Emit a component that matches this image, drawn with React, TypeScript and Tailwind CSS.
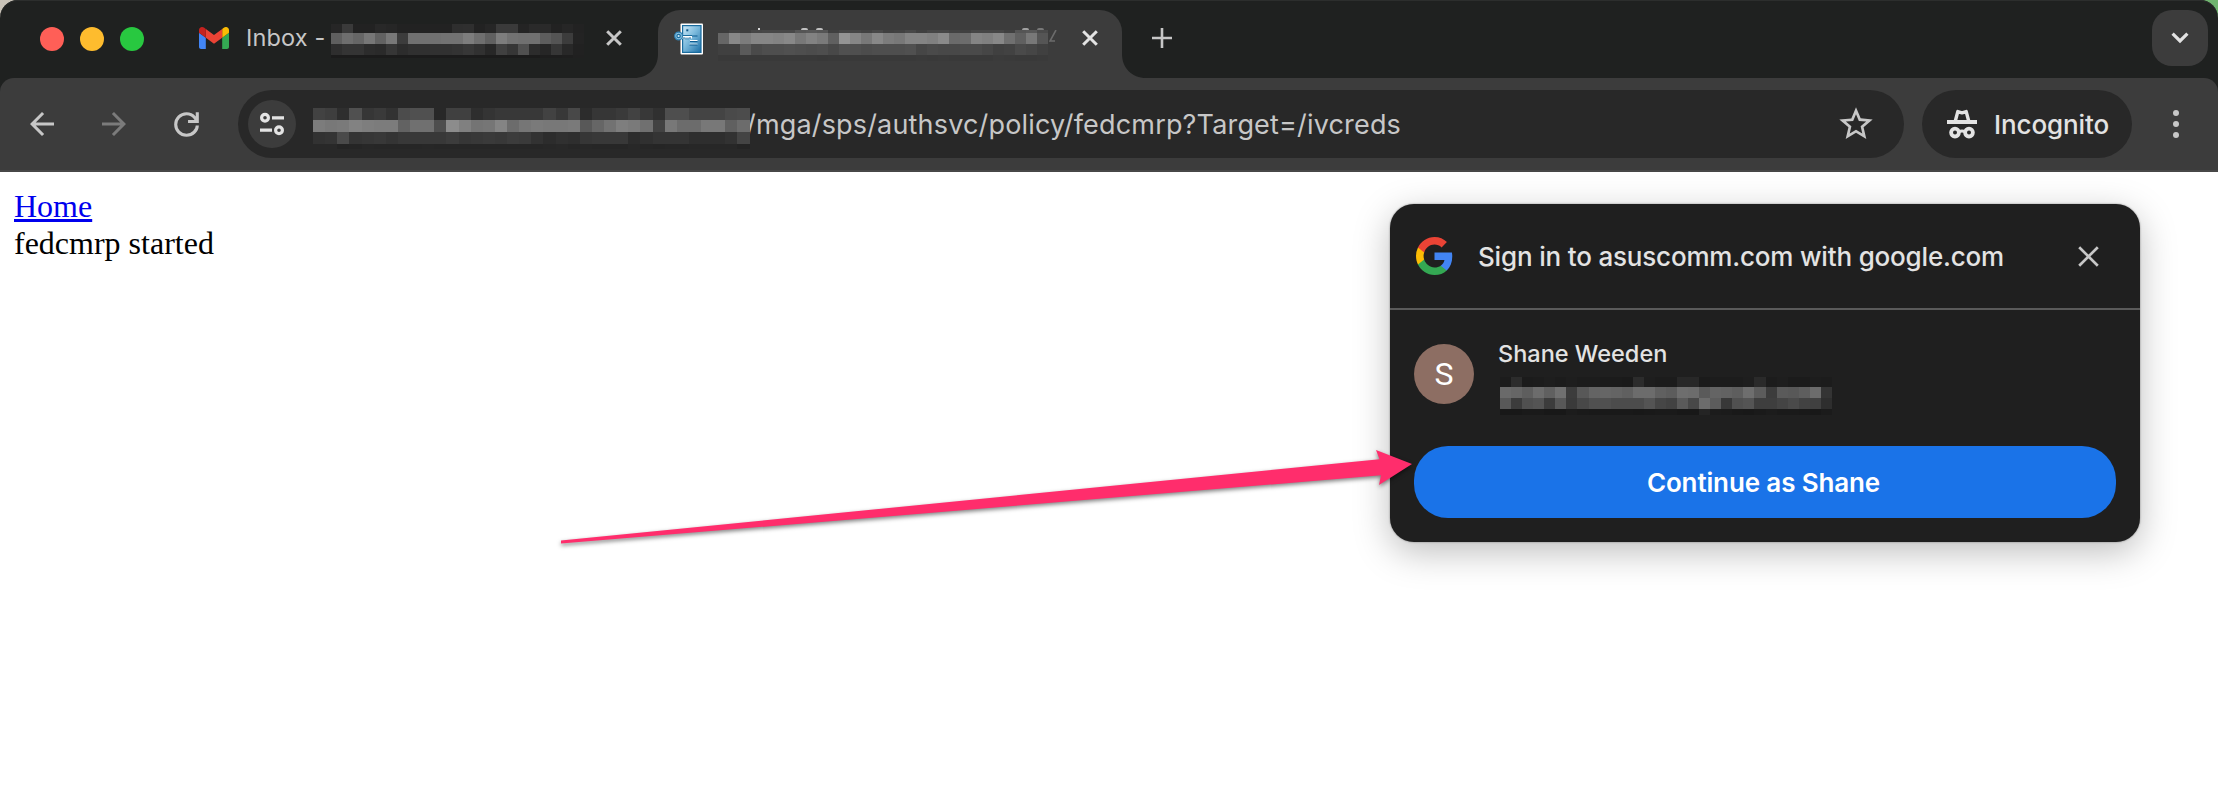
import React from "react";

type MosaicProps = {
  rows: { height: number; cells: string }[];
  cell: number;
};

/** Pixelated strip hiding private text; each cell is a two-digit grey level. */
function Mosaic({ rows, cell }: MosaicProps) {
  return (
    <div className="flex flex-col">
      {rows.map((row, r) => (
        <div key={r} className="flex" style={{ height: row.height }}>
          {row.cells.split(" ").map((g, i) => (
            <div key={i} className="h-full shrink-0" style={{ width: cell, backgroundColor: `#${g}${g}${g}` }} />
          ))}
        </div>
      ))}
    </div>
  );
}

const inboxMosaic = [
  { height: 9, cells: "26 3a 22 22 28 26 22 22 22 22 22 2e 2f 22 26 3a 3a 24 2a 2a 22 26 22" },
  { height: 11, cells: "5f 6e 66 77 62 78 3c 70 70 70 72 72 7d 6f 60 7d 72 70 70 5d 54 3c 23" },
  { height: 11, cells: "2e 34 34 2c 2a 36 2c 30 30 31 31 33 37 31 27 40 36 50 2c 26 36 28 21" },
  { height: 3, cells: "1b 1b 1b 1b 1b 1b 1b 1b 1b 1b 1b 1b 1b 1b 1b 1b 1b 1b 1b 1d 1d 1e 20" },
];

const tabMosaic = [
  { height: 3, cells: "3c 42 3e 46 48 48 48 55 58 55 40 46 46 42 48 40 42 48 40 46 46 42 40 46 46 46 40 55 58 4a" },
  { height: 11, cells: "66 88 7c 86 86 83 88 78 82 7a 60 94 86 78 88 7c 78 84 84 80 8a 6a 6c 84 80 88 70 60 78 55" },
  { height: 11, cells: "40 40 5a 4a 4e 4e 50 4e 4c 4e 48 50 4f 4c 4e 4e 4e 50 46 4a 48 48 4a 4a 46 40 42 4a 46 40" },
  { height: 6, cells: "39 39 39 39 39 39 39 39 39 38 39 39 39 39 39 39 39 39 3a 39 3a 39 39 39 39 3b 3a 39 39 3a" },
];

const urlMosaic = [
  { height: 12, cells: "42 3e 2e 50 36 3a 32 4c 50 50 28 40 40 2e 34 38 38 38 38 42 38 48 2c 36 36 3a 42 38 30 4e 4e 44 44 44 4a 4c" },
  { height: 12, cells: "7c 78 7a 82 7e 7c 7c 62 70 70 4e 8c 80 74 76 84 6c 76 7a 78 78 7a 58 66 72 7e 7a 70 42 78 6c 6c 78 78 60 6c" },
  { height: 12, cells: "32 34 4a 34 36 38 34 38 38 38 38 3c 36 38 3a 38 3c 3a 32 2c 30 2e 36 38 38 38 2c 30 34 34 34 2e 2e 2e 32 44" },
  { height: 5, cells: "28 28 24 25 27 26 26 26 26 27 26 26 26 26 26 26 26 26 26 27 28 26 27 26 26 26 28 26 25 26 26 27 27 27 27 24" },
];

const emailMosaic = [
  { height: 10, cells: "1c 2c 1b 1c 1e 1c 1e 1c 1c 1b 1b 1a 2c 1e 1c 1c 28 28 1b 1c 1c 1c 1e 2a 1c 1e 1b 1b 1d 1c" },
  { height: 11, cells: "6a 66 5e 6c 60 70 3c 58 64 66 64 60 6c 6c 60 5c 6e 6c 5a 64 62 5e 6e 5c 3c 5a 58 5e 6c 34" },
  { height: 11, cells: "58 3c 50 54 3c 58 3a 48 50 50 4c 4c 4c 54 46 42 5a 48 6c 5c 38 50 54 3e 3e 44 4a 42 40 2e" },
  { height: 6, cells: "18 18 1a 1a 18 18 1c 1a 19 19 19 19 18 19 1a 1a 18 18 24 1c 1b 19 18 1a 1c 1a 1a 19 18 1b" },
];

function Close({ size, width, className }: { size: number; width: number; className: string }) {
  return (
    <svg width={size} height={size} viewBox={`0 0 ${size} ${size}`} className={className}>
      <path
        d={`M1.2 1.2L${size - 1.2} ${size - 1.2}M${size - 1.2} 1.2L1.2 ${size - 1.2}`}
        stroke="currentColor"
        strokeWidth={width}
        fill="none"
      />
    </svg>
  );
}

function GmailIcon() {
  return (
    <svg width="30" height="22" viewBox="52 42 88 66" preserveAspectRatio="none">
      <path fill="#4285f4" d="M58 108h14V74L52 59v43c0 3.32 2.69 6 6 6" />
      <path fill="#34a853" d="M120 108h14c3.32 0 6-2.69 6-6V59l-20 15" />
      <path fill="#fbbc04" d="M120 48v26l20-15v-8c0-7.42-8.47-11.65-14.4-7.2" />
      <path fill="#ea4335" d="M72 74V48l24 18 24-18v26L96 92" />
      <path fill="#c5221f" d="M52 51v8l20 15V48l-5.6-4.2c-5.94-4.45-14.4-.22-14.4 7.2" />
    </svg>
  );
}

function DocKeyIcon() {
  return (
    <svg width="30" height="32" viewBox="0 0 30 32">
      <defs>
        <linearGradient id="doc" x1="0" y1="0" x2="1" y2="1">
          <stop offset="0" stopColor="#cfe9f6" />
          <stop offset="0.45" stopColor="#7dbbdd" />
          <stop offset="1" stopColor="#1b6ea5" />
        </linearGradient>
      </defs>
      <rect x="6.5" y="0.5" width="22.5" height="31" rx="1" fill="#fff" />
      <rect x="8.6" y="2.6" width="18.4" height="26.8" fill="url(#doc)" stroke="#1a6c9e" strokeWidth="1.2" />
      <rect x="12.3" y="6.3" width="2" height="2" fill="#0d5486" />
      <path d="M16 17.5h7.5M15.5 21.2h8" stroke="#fff" strokeWidth="1" />
      <path d="M18 13h5.5M16 18.5h7.5M15.5 22h8" stroke="#0d5c92" strokeWidth="1.2" />
      <path d="M8 13h10v2.5H8z" fill="#fff" />
      <path d="M8 12.5h10M10 16v-2M12 16.5v-2M14 16.5v-2M16 16v-2" stroke="#1a6c9e" strokeWidth="1" />
      <circle cx="4.6" cy="13" r="3.9" fill="#8cc3e2" stroke="#2f7fb0" strokeWidth="1.2" />
      <circle cx="4.6" cy="13" r="1.7" fill="#d6ecf7" stroke="#1a6c9e" strokeWidth="1.2" />
    </svg>
  );
}

function GoogleIcon() {
  return (
    <svg width="37" height="38" viewBox="2 2 44 44" preserveAspectRatio="none">
      <path fill="#4285f4" d="M45.12 24.5c0-1.56-.14-3.06-.4-4.5H24v8.51h11.84c-.51 2.75-2.06 5.08-4.39 6.64v5.52h7.11c4.16-3.83 6.56-9.47 6.56-16.17z" />
      <path fill="#34a853" d="M24 46c5.94 0 10.92-1.97 14.56-5.33l-7.11-5.52c-1.97 1.32-4.49 2.1-7.45 2.1-5.73 0-10.58-3.87-12.31-9.07H4.34v5.7C7.96 41.07 15.4 46 24 46z" />
      <path fill="#fbbc05" d="M11.69 28.18C11.25 26.86 11 25.45 11 24s.25-2.86.69-4.18v-5.7H4.34A21.99 21.99 0 0 0 2 24c0 3.55.85 6.91 2.34 9.88l7.35-5.7z" />
      <path fill="#ea4335" d="M24 10.75c3.23 0 6.13 1.11 8.41 3.29l6.31-6.31C34.91 4.18 29.93 2 24 2 15.4 2 7.96 6.93 4.34 14.12l7.35 5.7c1.73-5.2 6.58-9.07 12.31-9.07z" />
    </svg>
  );
}

function IncognitoIcon() {
  return (
    <svg width="30" height="30" viewBox="0 0 30 30" fill="none" stroke="currentColor">
      <path d="M0 13h30" strokeWidth="4" />
      <path d="M8.3 12L10.8 2.6L15 3.8L19.2 2.6L21.7 12" strokeWidth="3.4" strokeLinejoin="round" />
      <circle cx="8" cy="23.6" r="3.9" strokeWidth="3.8" />
      <circle cx="22" cy="23.6" r="3.9" strokeWidth="3.8" />
      <path d="M11.5 22.6q3.5-1.4 7 0" strokeWidth="3" />
    </svg>
  );
}

function TabStrip() {
  return (
    <div className="flex h-[78px] items-start">
      <div className="flex h-[78px] w-[199px] items-center gap-4 pl-10">
        <span className="size-6 rounded-full bg-[#ff5f57]" />
        <span className="size-6 rounded-full bg-[#febc2e]" />
        <span className="size-6 rounded-full bg-[#28c840]" />
      </div>
      <div className="flex h-[76px] w-[435px] items-center">
        <GmailIcon />
        <span className="ml-[17px] w-[85px] whitespace-nowrap text-[23.5px] leading-7 tracking-[0.15px] text-[#c7c7c7]">
          Inbox -
        </span>
        <div className="mt-[6px] w-[275px]">
          <Mosaic rows={inboxMosaic} cell={11} />
        </div>
        <Close size={16} width={3} className="text-[#c7c7c7]" />
      </div>
      <svg width="24" height="24" viewBox="0 0 24 24" className="mt-[54px] text-[#3c3c3c]">
        <path d="M24 0v24H0C14 24 24 14 24 0z" fill="currentColor" />
      </svg>
      <div className="relative mt-[10px] flex h-[68px] w-[464px] rounded-t-[22px] bg-[#3c3c3c] pl-4">
        <div className="mt-[13px] w-[44px]">
          <DocKeyIcon />
        </div>
        <div className="mt-5 w-[331px]">
          <Mosaic rows={tabMosaic} cell={11.03} />
        </div>
        <svg width="9" height="13" viewBox="0 0 9 13" className="mt-5 text-[#6b6b6b]">
          <path d="M7 0L1 11h5" stroke="currentColor" strokeWidth="1.6" fill="none" />
        </svg>
        <Close size={16} width={3} className="mt-5 ml-6 text-[#e3e3e3]" />
        <span className="absolute top-[18px] left-[100px] h-[2px] w-[2px] bg-[#d8d8d8]" />
        <span className="absolute top-[18px] left-[143px] h-[2px] w-[7px] rounded-t-full bg-[#c0c0c0]" />
        <span className="absolute top-[18px] left-[158px] h-[2px] w-[7px] rounded-t-full bg-[#c0c0c0]" />
        <span className="absolute top-[18px] left-[364px] h-[2px] w-[7px] rounded-t-full bg-[#a0a0a0]" />
        <span className="absolute top-[18px] left-[379px] h-[2px] w-[7px] rounded-t-full bg-[#787878]" />
      </div>
      <svg width="24" height="24" viewBox="0 0 24 24" className="mt-[54px] text-[#3c3c3c]">
        <path d="M0 0v24h24C10 24 0 14 0 0z" fill="currentColor" />
      </svg>
      <svg width="20" height="20" viewBox="0 0 20 20" className="mt-7 ml-[6px] text-[#c7c7c7]">
        <path d="M10 0v20M0 10h20" stroke="currentColor" strokeWidth="2.6" />
      </svg>
      <div className="mt-[10px] mr-[10px] ml-auto flex size-14 items-center justify-center rounded-[20px] bg-[#3c3c3c] text-[#e3e3e3]">
        <svg width="18" height="12" viewBox="0 0 18 12">
          <path d="M1.6 1.6L9 9l7.4-7.4" stroke="currentColor" strokeWidth="3.2" fill="none" />
        </svg>
      </div>
    </div>
  );
}

function Toolbar() {
  return (
    <div className="flex h-[94px] items-center rounded-t-[14px] border-b-2 border-[#474747] bg-[#3c3c3c] pt-px pb-px text-[#c7c7c7]">
      <svg width="36" height="36" viewBox="0 0 24 24" fill="currentColor" className="ml-[24px]">
        <path d="m7.825 13 5.6 5.6L12 20l-8-8 8-8 1.425 1.4-5.6 5.6H20v2z" />
      </svg>
      <svg width="36" height="36" viewBox="0 0 24 24" fill="currentColor" className="ml-[35.5px] text-[#7b7b7b]">
        <path d="m16.175 13-5.6 5.6L12 20l8-8-8-8-1.425 1.4 5.6 5.6H4v2z" />
      </svg>
      <svg width="37" height="37" viewBox="0 0 24 24" fill="currentColor" className="ml-[36px]">
        <path d="M12 20q-3.35 0-5.675-2.325Q4 15.35 4 12q0-3.35 2.325-5.675Q8.65 4 12 4q1.725 0 3.3.713 1.575.712 2.7 2.037V4h2v7h-7V9h4.2q-.8-1.4-2.187-2.2Q13.625 6 12 6 9.5 6 7.75 7.75T6 12q0 2.5 1.75 4.25T12 18q2.5 0 4.25-1.75T18 12.6h2q-.1 3.1-2.375 5.25T12 20z" />
      </svg>
      <div className="ml-[33.5px] flex h-[68px] w-[1666px] items-center rounded-full bg-[#282828] pl-[10px]">
        <div className="flex size-12 items-center justify-center rounded-full bg-[#3c3c3c] text-[#e3e3e3]">
          <svg width="24" height="24" viewBox="0 0 24 24" fill="none" stroke="currentColor" strokeWidth="3.2">
            <circle cx="5" cy="5.8" r="3.4" />
            <path d="M12 5.8h12M0 18.2h12" />
            <circle cx="19" cy="18.2" r="3.4" />
          </svg>
        </div>
        <div className="z-10 mt-[9px] ml-[17px] w-[433px]">
          <Mosaic rows={urlMosaic} cell={12.14} />
        </div>
        <span className="mt-[2px] text-[27px] leading-8 tracking-[0.17px] whitespace-nowrap">
          /mga/sps/authsvc/policy/fedcmrp?Target=/ivcreds
        </span>
        <svg width="40" height="40" viewBox="0 0 24 24" fill="currentColor" className="mr-7 mb-px ml-auto">
          <path d="M22 9.24l-7.19-.62L12 2 9.19 8.63 2 9.24l5.46 4.73L5.82 21 12 17.27 18.18 21l-1.63-7.03L22 9.24zM12 15.4l-3.76 2.27 1-4.28-3.32-2.88 4.38-.38L12 6.1l1.71 4.04 4.38.38-3.32 2.88 1 4.28L12 15.4z" />
        </svg>
      </div>
      <div className="ml-[18px] flex h-[68px] w-[210px] items-center rounded-full bg-[#282828] pl-[25px] text-[#e3e3e3]">
        <IncognitoIcon />
        <span className="mt-[2px] ml-[17px] text-[26px] leading-8 font-[450] tracking-[-0.1px] whitespace-nowrap">
          Incognito
        </span>
      </div>
      <div className="ml-[41px] flex flex-col gap-[5px]">
        <span className="size-[6px] rounded-full bg-current" />
        <span className="size-[6px] rounded-full bg-current" />
        <span className="size-[6px] rounded-full bg-current" />
      </div>
    </div>
  );
}

function SignInDialog() {
  return (
    <div className="absolute top-[204px] left-[1390px] flex h-[338px] w-[750px] flex-col rounded-[24px] bg-[#1f1f1f] text-[#e3e3e3] shadow-[0_0_2px_rgba(0,0,0,0.45),0_10px_36px_rgba(0,0,0,0.26)]">
      <div className="flex h-[106px] items-center border-b-2 border-[#5a5a5a] pl-[26px]">
        <GoogleIcon />
        <span className="mt-[2px] ml-[25px] text-[26px] leading-8 font-[450] tracking-[-0.18px] whitespace-nowrap">
          Sign in to asuscomm.com with google.com
        </span>
        <Close size={21} width={2.7} className="mr-[41px] ml-auto text-[#c7c7c7]" />
      </div>
      <div className="flex pt-[22px] pl-6">
        <div className="mt-3 flex size-[60px] items-center justify-center rounded-full bg-[#8d6e63] font-[Roboto] text-[32px] leading-none text-white">
          S
        </div>
        <div className="ml-6 flex flex-col">
          <span className="mt-px self-start text-[23.5px] leading-[42px] font-[450] whitespace-nowrap">Shane Weeden</span>
          <div className="mt-[2px] ml-[2px]">
            <Mosaic rows={emailMosaic} cell={11.07} />
          </div>
        </div>
      </div>
      <button className="mt-auto mb-6 ml-6 flex h-[72px] w-[702px] items-center justify-center rounded-[34px] bg-[#1a73e8] pt-px pr-[3px] text-[26px] font-semibold tracking-[-0.13px] text-white">
        Continue as Shane
      </button>
    </div>
  );
}

function PointerArrow() {
  return (
    <svg
      width="870"
      height="110"
      viewBox="555 445 870 110"
      className="absolute top-[445px] left-[555px] drop-shadow-[0_2px_2px_rgba(0,0,0,0.5)]"
    >
      <path d="M561 540.6L1379.5 459.2L1376 450L1412 464L1379 485L1381 475.3L561 543.6z" fill="#ff2d6c" />
    </svg>
  );
}

export default function App() {
  return (
    <div className="relative h-[808px] w-[2218px] overflow-hidden bg-white font-[Inter,sans-serif]">
      <div className="bg-linear-to-r from-[#c9c3b8] to-[#6fb36f]">
        <div className="rounded-t-[18px] bg-[#1f2120] shadow-[inset_0_1px_0_#2c2e2d]">
          <TabStrip />
          <Toolbar />
        </div>
      </div>
      <main className="px-[14px] pt-4 font-['Liberation_Serif',serif] text-[32px] leading-[37px] text-black">
        <a href="#" className="text-[#0000ee] underline decoration-[3px] underline-offset-[2px]">
          Home
        </a>
        <p>fedcmrp started</p>
      </main>
      <SignInDialog />
      <PointerArrow />
    </div>
  );
}
